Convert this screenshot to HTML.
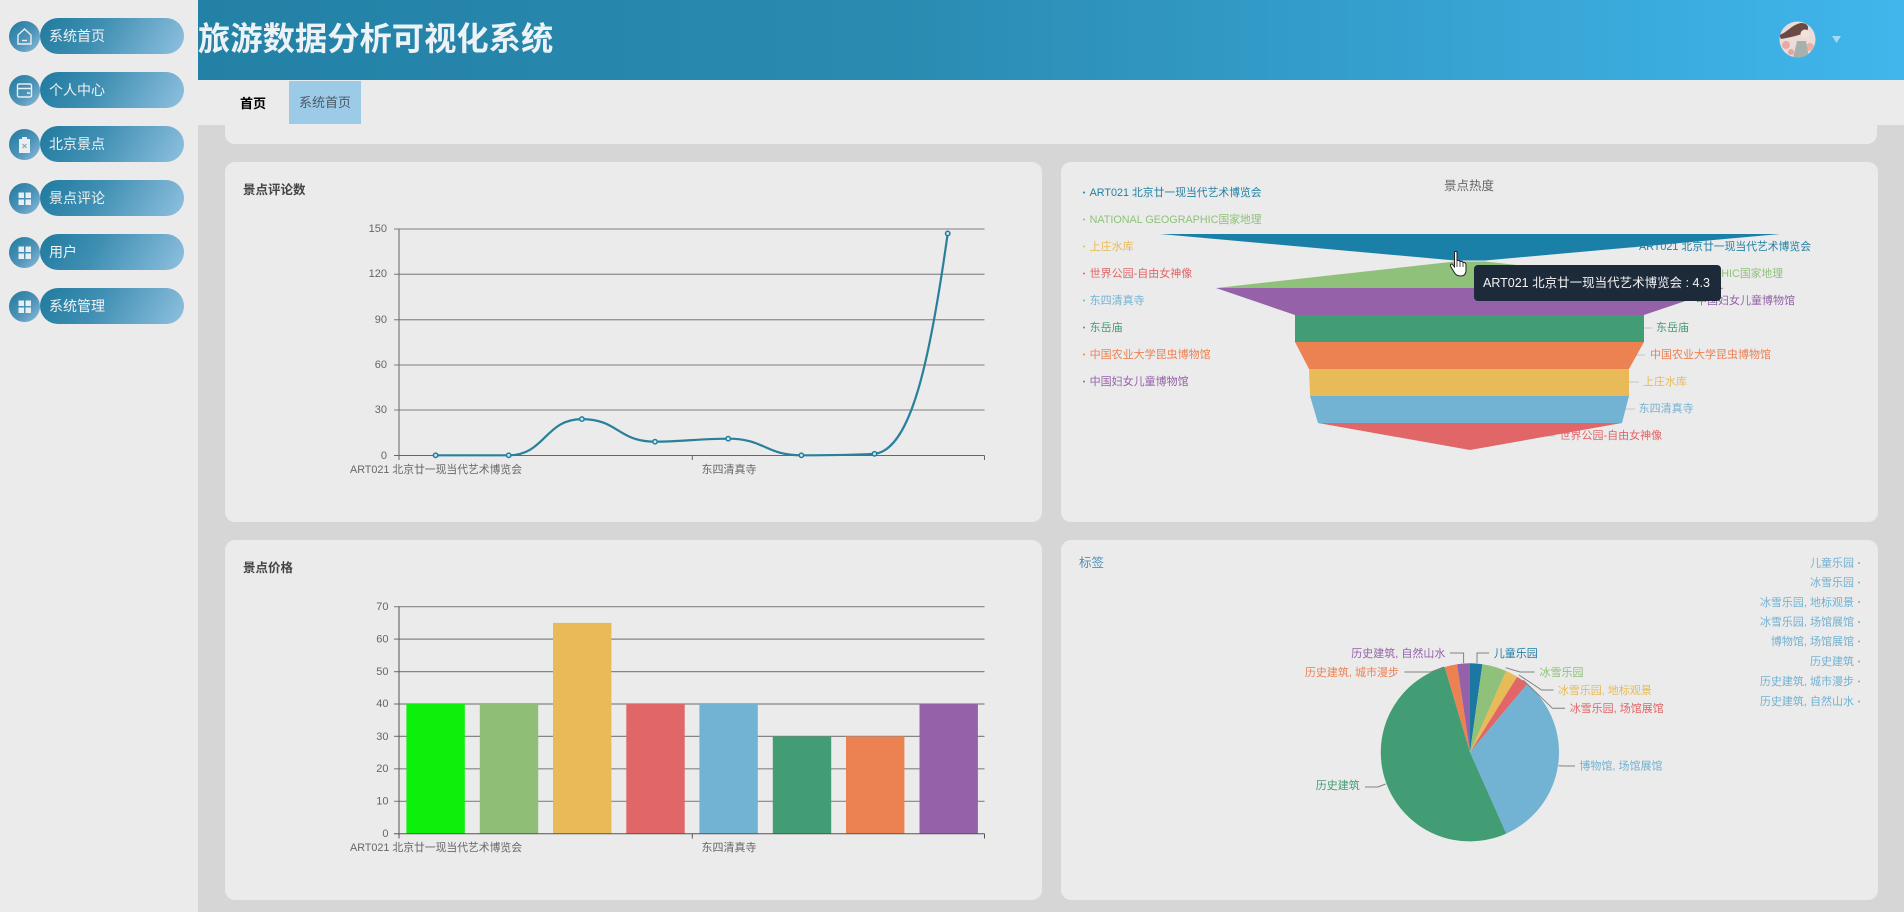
<!DOCTYPE html>
<html lang="zh">
<head>
<meta charset="utf-8">
<title>旅游数据分析可视化系统</title>
<style>
html,body{margin:0;padding:0;width:1904px;height:912px;overflow:hidden;background:#d6d6d6;font-family:"Liberation Sans","Noto Sans CJK SC",sans-serif}
.abs{position:absolute}
#side{left:0;top:0;width:198px;height:912px;background:#ebebeb}
.circ{position:absolute;left:9px;width:31px;height:31px;border-radius:50%;background:linear-gradient(135deg,#1f7a9f 0%,#4d93b8 55%,#8cbcdb 100%)}
.circ svg{position:absolute;left:0;top:0}
.pill{position:absolute;left:40px;width:144px;height:36px;border-radius:18px;background:linear-gradient(120deg,#1f7b9f 0%,#3f8fb3 40%,#8fc0df 100%);color:#f2f2f2;font-size:14px;line-height:36px;padding-left:9px;box-sizing:border-box}
#hdr{left:198px;top:0;width:1706px;height:80px;background:linear-gradient(90deg,#2381a6 0%,#2a8ab0 40%,#40b6ec 100%);overflow:hidden}
#hdr .t{position:absolute;left:0;top:17px;font-size:32.3px;font-weight:700;line-height:44px;color:#ecf2f5;white-space:nowrap}
#tabs{left:198px;top:80px;width:1706px;height:45px;background:#ebebeb}
#tab1{left:240px;top:94px;font-size:13px;font-weight:700;color:#000;line-height:20px}
#tab2{left:289px;top:81px;width:72px;height:43px;background:#9ccbe8;color:#4a5a68;font-size:13px;line-height:43px;text-align:center}
.card{position:absolute;background:#ebebeb;border-radius:10px}
svg#ch{position:absolute;left:0;top:0}
svg text{font-family:"Liberation Sans","Noto Sans CJK SC",sans-serif;font-size:11px}
#tip{left:1474px;top:265px;width:247px;height:36px;background:#1d2a39;border-radius:4px;color:#f4f4f4;font-size:12.5px;line-height:36px;padding-left:9px;box-sizing:border-box;white-space:nowrap;overflow:hidden}
</style>
</head>
<body>
<div class="abs" id="side">
  <div class="circ" style="top:21px"><svg width="31" height="31" fill="none" stroke="#e8eef2" stroke-width="1.4"><path d="M9 14 L15.5 8 L22 14 V23 H9 Z"/><path d="M13 19.5 H18"/></svg></div>
  <div class="pill" style="top:18px">系统首页</div>
  <div class="circ" style="top:75px"><svg width="31" height="31" fill="none" stroke="#e8eef2" stroke-width="1.4"><rect x="8.5" y="9" width="14" height="13" rx="1.5"/><path d="M8.5 13.5 H22.5 M18 18 H21"/></svg></div>
  <div class="pill" style="top:72px">个人中心</div>
  <div class="circ" style="top:129px"><svg width="31" height="31"><path d="M10 10 H13 V8 H18 V10 H21 V24 H10 Z" fill="#e8eef2"/><path d="M13.5 15 L17.5 19 M17.5 15 L13.5 19" stroke="#8a9aa8" stroke-width="1"/></svg></div>
  <div class="pill" style="top:126px">北京景点</div>
  <div class="circ" style="top:183px"><svg width="31" height="31" fill="#e8eef2"><rect x="9.5" y="9.5" width="5.5" height="5.5"/><rect x="16.5" y="9.5" width="5.5" height="5.5"/><rect x="9.5" y="16.5" width="5.5" height="5.5"/><rect x="16.5" y="16.5" width="5.5" height="5.5"/></svg></div>
  <div class="pill" style="top:180px">景点评论</div>
  <div class="circ" style="top:237px"><svg width="31" height="31" fill="#e8eef2"><rect x="9.5" y="9.5" width="5.5" height="5.5"/><rect x="16.5" y="9.5" width="5.5" height="5.5"/><rect x="9.5" y="16.5" width="5.5" height="5.5"/><rect x="16.5" y="16.5" width="5.5" height="5.5"/></svg></div>
  <div class="pill" style="top:234px">用户</div>
  <div class="circ" style="top:291px"><svg width="31" height="31" fill="#e8eef2"><rect x="9.5" y="9.5" width="5.5" height="5.5"/><rect x="16.5" y="9.5" width="5.5" height="5.5"/><rect x="9.5" y="16.5" width="5.5" height="5.5"/><rect x="16.5" y="16.5" width="5.5" height="5.5"/></svg></div>
  <div class="pill" style="top:288px">系统管理</div>
</div>

<div class="abs" id="hdr">
  <div class="t">旅游数据分析可视化系统</div>
  <svg class="abs" style="left:1581px;top:21px" width="37" height="37" viewBox="0 0 37 37">
    <defs><clipPath id="av"><circle cx="18.5" cy="18.5" r="18"/></clipPath></defs>
    <g clip-path="url(#av)">
      <rect width="37" height="37" fill="#ecdcd8"/>
      <circle cx="7" cy="24" r="4" fill="#e8a8a4"/>
      <circle cx="31" cy="26" r="4" fill="#e8b0a8"/>
      <circle cx="12" cy="31" r="3" fill="#e6a5a0"/>
      <path d="M14 37 L18 20 L27 20 L30 37 Z" fill="#a8b0ae"/>
      <path d="M0 14 C8 12 12 4 22 2 C30 2 31 8 26 12 C20 14 14 16 2 18 Z" fill="#6a4a44"/>
      <circle cx="26" cy="13" r="4.5" fill="#f2e2da"/>
    </g>
  </svg>
  <svg class="abs" style="left:1633px;top:35px" width="11" height="9"><path d="M1 1 H10 L5.5 8 Z" fill="#a2d9f5"/></svg>
</div>

<div class="card" style="left:225px;top:105px;width:1652px;height:39px"></div>
<div class="abs" id="tabs"></div>
<div class="abs" id="tab1">首页</div>
<div class="abs" id="tab2">系统首页</div>

<div class="card" style="left:225px;top:162px;width:817px;height:360px"></div>
<div class="card" style="left:1061px;top:162px;width:817px;height:360px"></div>
<div class="card" style="left:225px;top:540px;width:817px;height:360px"></div>
<div class="card" style="left:1061px;top:540px;width:817px;height:360px"></div>

<svg id="ch" width="1904" height="912" viewBox="0 0 1904 912">
  <!-- Line chart -->
  <text x="243" y="194" fill="#444" font-weight="700" style="font-size:12.5px">景点评论数</text>
  <g stroke="#959595" stroke-width="1.3" fill="none">
    <path d="M394 229H984.5M394 274.3H984.5M394 319.7H984.5M394 365H984.5M394 410H984.5"/>
    <path d="M399 229V455.5M394 455.5H984.5M399 455.5V460M692.3 455.5V460M984.5 455.5V460" stroke="#666" stroke-width="1"/>
  </g>
  <g fill="#666" text-anchor="end">
    <text x="387" y="232">150</text><text x="387" y="277">120</text><text x="387" y="323">90</text><text x="387" y="368">60</text><text x="387" y="413">30</text><text x="387" y="459">0</text>
  </g>
  <g fill="#666" text-anchor="middle">
    <text x="436" y="473" textLength="172" lengthAdjust="spacingAndGlyphs">ART021 北京廿一现当代艺术博览会</text>
    <text x="729" y="473">东四清真寺</text>
  </g>
  <path d="M435.6 455.3 L508.7 455.3 C545 455.3 545 419.1 581.9 419.1 C618 419.1 618 441.7 655 441.7 C680 441.7 700 438.7 728.2 438.7 C765 438.7 765 455.3 801.4 455.3 C826 455.3 850 455.2 874.5 453.8 C911 450 930 360 947.7 233.5" fill="none" stroke="#2a7f9b" stroke-width="2.2"/>
  <g fill="#cfe6ee" stroke="#1f7fa3" stroke-width="1.5">
    <circle cx="435.6" cy="455.3" r="2.2"/><circle cx="508.7" cy="455.3" r="2.2"/><circle cx="581.9" cy="419.1" r="2.2"/><circle cx="655" cy="441.7" r="2.2"/><circle cx="728.2" cy="438.7" r="2.2"/><circle cx="801.4" cy="455.3" r="2.2"/><circle cx="874.5" cy="453.8" r="2.2"/><circle cx="947.7" cy="233.5" r="2.2"/>
  </g>

  <!-- Bar chart -->
  <text x="243" y="572" fill="#444" font-weight="700" style="font-size:12.5px">景点价格</text>
  <g stroke="#858585" stroke-width="1.2" fill="none">
    <path d="M394 606.7H984.5M394 639.1H984.5M394 671.6H984.5M394 704H984.5M394 736.4H984.5M394 768.8H984.5M394 801.3H984.5"/>
  </g>
  <g fill="#666" text-anchor="end">
    <text x="388.5" y="610">70</text><text x="388.5" y="642.5">60</text><text x="388.5" y="675">50</text><text x="388.5" y="707">40</text><text x="388.5" y="740">30</text><text x="388.5" y="772">20</text><text x="388.5" y="804.5">10</text><text x="388.5" y="837">0</text>
  </g>
  <rect x="406.4" y="704" width="58.4" height="129.7" fill="#0cf00c"/>
  <rect x="479.8" y="704" width="58.4" height="129.7" fill="#8fbf76"/>
  <rect x="553" y="622.9" width="58.4" height="210.8" fill="#e8ba58"/>
  <rect x="626.3" y="704" width="58.4" height="129.7" fill="#e06668"/>
  <rect x="699.4" y="704" width="58.4" height="129.7" fill="#72b2d2"/>
  <rect x="772.8" y="736.4" width="58.4" height="97.3" fill="#429c74"/>
  <rect x="846" y="736.4" width="58.4" height="97.3" fill="#ec8152"/>
  <rect x="919.5" y="704" width="58.4" height="129.7" fill="#9561a8"/>
  <path d="M399 606.7V833.7M394 833.7H984.5M399 833.7V838.5M692.3 833.7V838.5M984.5 833.7V838.5" stroke="#555" stroke-width="1" fill="none"/>
  <g fill="#666" text-anchor="middle">
    <text x="436" y="851" textLength="172" lengthAdjust="spacingAndGlyphs">ART021 北京廿一现当代艺术博览会</text>
    <text x="729" y="851">东四清真寺</text>
  </g>

  <!-- Funnel -->
  <text x="1469" y="190" fill="#666" text-anchor="middle" style="font-size:12.5px">景点热度</text>
  <g>
    <g fill="#1f7fa3"><circle cx="1084" cy="192.5" r="1"/><text x="1089.6" y="196" textLength="172" lengthAdjust="spacingAndGlyphs">ART021 北京廿一现当代艺术博览会</text></g>
    <g fill="#8fc17a"><circle cx="1084" cy="219.5" r="1"/><text x="1089.6" y="223" textLength="172" lengthAdjust="spacingAndGlyphs">NATIONAL GEOGRAPHIC国家地理</text></g>
    <g fill="#e8ba58"><circle cx="1084" cy="246.5" r="1"/><text x="1089.6" y="250">上庄水库</text></g>
    <g fill="#e06668"><circle cx="1084" cy="273.5" r="1"/><text x="1089.6" y="277">世界公园-自由女神像</text></g>
    <g fill="#72b2d2"><circle cx="1084" cy="300.5" r="1"/><text x="1089.6" y="304">东四清真寺</text></g>
    <g fill="#429c74"><circle cx="1084" cy="327.5" r="1"/><text x="1089.6" y="331">东岳庙</text></g>
    <g fill="#ec8152"><circle cx="1084" cy="354.5" r="1"/><text x="1089.6" y="358">中国农业大学昆虫博物馆</text></g>
    <g fill="#9561a8"><circle cx="1084" cy="381.5" r="1"/><text x="1089.6" y="385">中国妇女儿童博物馆</text></g>
  </g>
  <g stroke="#c4c4c4" stroke-width="1" fill="none">
    <path d="M1622 247H1636M1644 328H1652M1636 355H1645M1629 382H1639M1625 409H1635M1544 436H1555"/>
  </g>
  <polygon points="1160,234 1780,234 1485,260.5 1455,260.5" fill="#1a80a8"/>
  <polygon points="1455,261.5 1485,261.5 1724,288 1216,288" fill="#8fc17a"/>
  <polygon points="1216,288 1724,288 1644,315 1295,315" fill="#9561a8"/>
  <polygon points="1295,315 1644,315 1644,342 1295,342" fill="#429c74"/>
  <polygon points="1295,342 1644,342 1629,369 1309,369" fill="#ec8152"/>
  <polygon points="1309,369 1629,369 1629,396 1310,396" fill="#e8ba58"/>
  <polygon points="1310,396 1629,396 1622,423 1318,423" fill="#72b2d2"/>
  <polygon points="1318,423 1622,423 1470,450" fill="#e06668"/>
  <g>
    <text x="1639" y="250" fill="#1f7fa3" textLength="172" lengthAdjust="spacingAndGlyphs">ART021 北京廿一现当代艺术博览会</text>
    <text x="1611" y="277" fill="#8fc17a" textLength="172" lengthAdjust="spacingAndGlyphs">NATIONAL GEOGRAPHIC国家地理</text>
    <text x="1795" y="304" fill="#9561a8" text-anchor="end">中国妇女儿童博物馆</text>
    <text x="1656" y="331" fill="#429c74">东岳庙</text>
    <text x="1650" y="358" fill="#ec8152">中国农业大学昆虫博物馆</text>
    <text x="1643" y="385" fill="#e8ba58">上庄水库</text>
    <text x="1638.6" y="412" fill="#72b2d2">东四清真寺</text>
    <text x="1559.5" y="439" fill="#e06668">世界公园-自由女神像</text>
  </g>

  <!-- Pie -->
  <text x="1079" y="567" fill="#4f8fb8" style="font-size:12.5px">标签</text>
  <g fill="#72b2d2" text-anchor="end">
    <text x="1854" y="566.5">儿童乐园</text><text x="1854" y="586">冰雪乐园</text><text x="1854" y="606">冰雪乐园, 地标观景</text><text x="1854" y="625.5">冰雪乐园, 场馆展馆</text><text x="1854" y="645">博物馆, 场馆展馆</text><text x="1854" y="665">历史建筑</text><text x="1854" y="685">历史建筑, 城市漫步</text><text x="1854" y="705">历史建筑, 自然山水</text>
  </g>
  <g fill="#72b2d2">
    <circle cx="1859" cy="563" r="1"/><circle cx="1859" cy="582.5" r="1"/><circle cx="1859" cy="602" r="1"/><circle cx="1859" cy="622" r="1"/><circle cx="1859" cy="641.5" r="1"/><circle cx="1859" cy="661.5" r="1"/><circle cx="1859" cy="681.5" r="1"/><circle cx="1859" cy="701.5" r="1"/>
  </g>
  <g>
    <path d="M1470 752.3L1470 663.3A89 89 0 0 1 1482.4 664.2Z" fill="#1a78a3"/>
    <path d="M1470 752.3L1482.4 664.2A89 89 0 0 1 1506.2 671Z" fill="#8fc17a"/>
    <path d="M1470 752.3L1506.2 671A89 89 0 0 1 1517.2 676.8Z" fill="#e8ba58"/>
    <path d="M1470 752.3L1517.2 676.8A89 89 0 0 1 1527.2 684.1Z" fill="#e06668"/>
    <path d="M1470 752.3L1527.2 684.1A89 89 0 0 1 1506.2 833.6Z" fill="#72b2d2"/>
    <path d="M1470 752.3L1506.2 833.6A89 89 0 1 1 1444.7 667Z" fill="#429c74"/>
    <path d="M1470 752.3L1444.7 667A89 89 0 0 1 1457.1 664.2Z" fill="#ec8152"/>
    <path d="M1470 752.3L1457.1 664.2A89 89 0 0 1 1470 663.3Z" fill="#9561a8"/>
  </g>
  <g stroke="#808080" stroke-width="1" fill="none">
    <path d="M1477 663V653H1489"/>
    <path d="M1505.6 667.7L1520 672H1534.7"/>
    <path d="M1519 675L1541.7 690H1553.5"/>
    <path d="M1523 680L1552.5 708.3H1565"/>
    <path d="M1558.4 765.7L1564 766H1575"/>
    <path d="M1385.6 784L1378 787H1365"/>
    <path d="M1444 667L1431 672H1404.4"/>
    <path d="M1463.6 663V653H1450"/>
  </g>
  <g>
    <text x="1493.8" y="657" fill="#1f7fa3">儿童乐园</text>
    <text x="1539.5" y="676" fill="#8fc17a">冰雪乐园</text>
    <text x="1557.8" y="694" fill="#e8ba58">冰雪乐园, 地标观景</text>
    <text x="1569.7" y="712" fill="#e06668">冰雪乐园, 场馆展馆</text>
    <text x="1579.4" y="769.5" fill="#72b2d2">博物馆, 场馆展馆</text>
    <text x="1359.8" y="789" fill="#429c74" text-anchor="end">历史建筑</text>
    <text x="1399" y="676" fill="#ec8152" text-anchor="end">历史建筑, 城市漫步</text>
    <text x="1445.4" y="657" fill="#9561a8" text-anchor="end">历史建筑, 自然山水</text>
  </g>
</svg>

<div class="abs" id="tip">ART021 北京廿一现当代艺术博览会 : 4.3</div>

<svg class="abs" style="left:1449px;top:250px" width="22" height="28" viewBox="0 0 22 28">
  <path d="M5.5 2.5 C5.5 1 8 1 8 2.5 V11 C9.5 10 10.5 10.5 11 11.5 C12.5 10.8 13.5 11.5 14 12.5 C15.5 12 17 13 17 15 V20 C17 24 15 26 11.5 26 C8 26 6.5 24.5 5 22 L1.5 16 C1 14.5 2.5 13.5 3.5 14.5 L5.5 17 Z" fill="#fff" stroke="#222" stroke-width="1"/>
  <path d="M8 12V17M11 12V17M14 13V17" stroke="#222" stroke-width=".8" fill="none"/>
</svg>
</body>
</html>
